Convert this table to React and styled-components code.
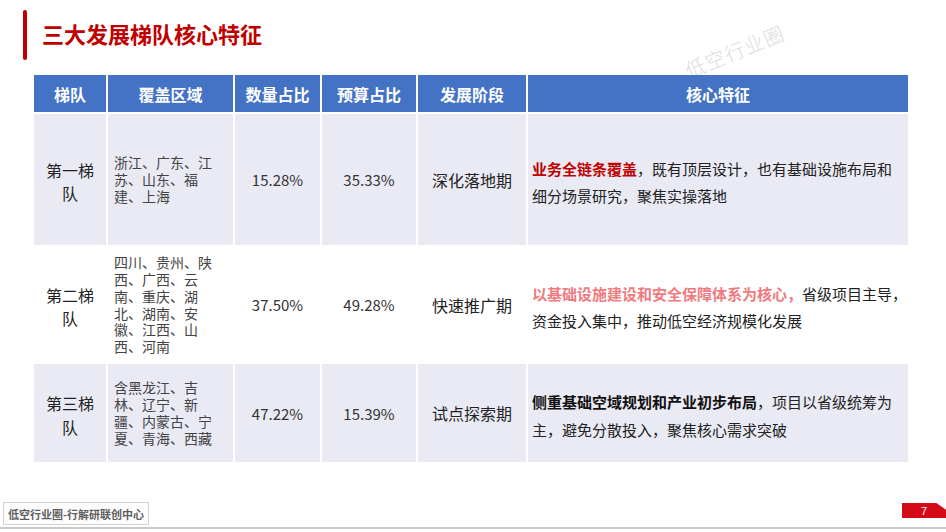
import React from "react";
import styled, { createGlobalStyle } from "styled-components";

const GlobalStyle = createGlobalStyle`
  html, body {
    margin: 0;
    padding: 0;
    background: #ffffff;
  }
  body {
    font-family: "Noto Sans CJK SC", "Noto Sans", sans-serif;
    color: #222;
  }
`;

const Page = styled.div`
  position: relative;
  width: 946px;
  height: 532px;
  overflow: hidden;
  display: flex;
  flex-direction: column;
  background: #fff;
`;

const TitleRow = styled.div`
  display: flex;
  align-items: center;
  gap: 15px;
  height: 50px;
  margin-top: 10px;
  padding-left: 23px;
`;

const TitleBar = styled.div`
  width: 4px;
  height: 50px;
  border-radius: 2px;
  background: #c00000;
`;

const Title = styled.h1`
  margin: 0 0 4px;
  font-size: 22px;
  font-weight: 700;
  color: #c00000;
  letter-spacing: 0;
`;

const Watermark = styled.div`
  position: absolute;
  left: 686px;
  top: 56px;
  font-size: 20px;
  font-weight: 300;
  color: #dcdcdc;
  letter-spacing: 1px;
  transform: rotate(-22deg);
  transform-origin: left center;
  z-index: 0;
`;

const Grid = styled.div`
  position: relative;
  z-index: 1;
  margin: 15px 0 0 34px;
  width: 874px;
  display: grid;
  grid-template-columns: 72px 125px 85px 94px 108px 380px;
  grid-template-rows: 37px 131px 115px 98px;
  gap: 2px;
`;

const Head = styled.div`
  background: #4472c4;
  color: #fff;
  font-size: 16px;
  font-weight: 700;
  display: flex;
  align-items: center;
  justify-content: center;
`;

const Cell = styled.div`
  background: ${(p) => (p.$shaded ? "#e9eaf4" : "#ffffff")};
  display: flex;
  align-items: center;
  justify-content: ${(p) => (p.$left ? "flex-start" : "center")};
  padding: ${(p) => (p.$left ? "5px 0 0 4px" : "5px 0 0")};
  box-sizing: border-box;
  text-align: ${(p) => (p.$left ? "left" : "center")};
  & > * {
    flex-shrink: 0;
  }
`;

const Tier = styled.div`
  font-size: 16px;
  line-height: 23.5px;
  color: #222;
  width: 52px;
`;

const Region = styled.div`
  font-size: 14px;
  line-height: 16.8px;
  color: #444;
  width: 106px;
  margin: -5px 0 0 2px;
`;

const Num = styled.div`
  font-size: 15px;
  color: #333;
  margin-top: -5px;
`;

const Stage = styled.div`
  font-size: 16px;
  color: #222;
  margin-top: -5px;
`;

const Feature = styled.div`
  font-size: 15px;
  line-height: 27.5px;
  color: #222;
  width: 376px;
`;

const Em = styled.span`
  font-weight: 700;
  color: ${(p) => p.$color || "#111"};
`;

const Footer = styled.div`
  margin-top: auto;
  margin-bottom: 3px;
  height: 25px;
  display: flex;
  justify-content: space-between;
  align-items: flex-start;
  padding-left: 3px;
  border-bottom: 2px solid #c9c9c9;
`;

const Source = styled.div`
  height: 21px;
  padding: 0 4px;
  border: 1px solid #d2d2d2;
  background: #fcfcfc;
  font-size: 11px;
  font-weight: 700;
  color: #5f5f5f;
  display: flex;
  align-items: center;
`;

const PageNo = styled.div`
  margin-top: 1px;
  width: 44px;
  height: 15px;
  background: #d40a18;
  color: #fff;
  font-family: "Liberation Sans", Arial, sans-serif;
  font-size: 11px;
  display: flex;
  align-items: center;
  justify-content: center;
  clip-path: polygon(0 0, 78% 0, 100% 45%, 100% 100%, 0 100%);
`;

const rows = [
  {
    tier: "第一梯队",
    region: "浙江、广东、江苏、山东、福建、上海",
    count: "15.28%",
    budget: "35.33%",
    stage: "深化落地期",
    shaded: true,
    feature: (
      <>
        <Em $color="#c00000">业务全链条覆盖</Em>，既有顶层设计，也有基础设施布局和
        <br />
        细分场景研究，聚焦实操落地
      </>
    ),
  },
  {
    tier: "第二梯队",
    region: "四川、贵州、陕西、广西、云南、重庆、湖北、湖南、安徽、江西、山西、河南",
    count: "37.50%",
    budget: "49.28%",
    stage: "快速推广期",
    shaded: false,
    feature: (
      <>
        <Em $color="#f07a7e">以基础设施建设和安全保障体系为核心，</Em>省级项目主导，资金投入集中，推动低空经济规模化发展
      </>
    ),
  },
  {
    tier: "第三梯队",
    region: "含黑龙江、吉林、辽宁、新疆、内蒙古、宁夏、青海、西藏",
    count: "47.22%",
    budget: "15.39%",
    stage: "试点探索期",
    shaded: true,
    feature: (
      <>
        <Em>侧重基础空域规划和产业初步布局</Em>，项目以省级统筹为主，避免分散投入，聚焦核心需求突破
      </>
    ),
  },
];

const headers = ["梯队", "覆盖区域", "数量占比", "预算占比", "发展阶段", "核心特征"];

export default function App() {
  return (
    <>
      <GlobalStyle />
      <Page>
        <TitleRow>
          <TitleBar />
          <Title>三大发展梯队核心特征</Title>
        </TitleRow>
        <Watermark>低空行业圈</Watermark>

        <Grid>
          {headers.map((h) => (
            <Head key={h}>{h}</Head>
          ))}
          {rows.map((r) => (
            <React.Fragment key={r.tier}>
              <Cell $shaded={r.shaded}>
                <Tier>{r.tier}</Tier>
              </Cell>
              <Cell $shaded={r.shaded} $left>
                <Region>{r.region}</Region>
              </Cell>
              <Cell $shaded={r.shaded}>
                <Num>{r.count}</Num>
              </Cell>
              <Cell $shaded={r.shaded}>
                <Num>{r.budget}</Num>
              </Cell>
              <Cell $shaded={r.shaded}>
                <Stage>{r.stage}</Stage>
              </Cell>
              <Cell $shaded={r.shaded} $left>
                <Feature>{r.feature}</Feature>
              </Cell>
            </React.Fragment>
          ))}
        </Grid>

        <Footer>
          <Source>低空行业圈-行解研联创中心</Source>
          <PageNo>7</PageNo>
        </Footer>
      </Page>
    </>
  );
}
